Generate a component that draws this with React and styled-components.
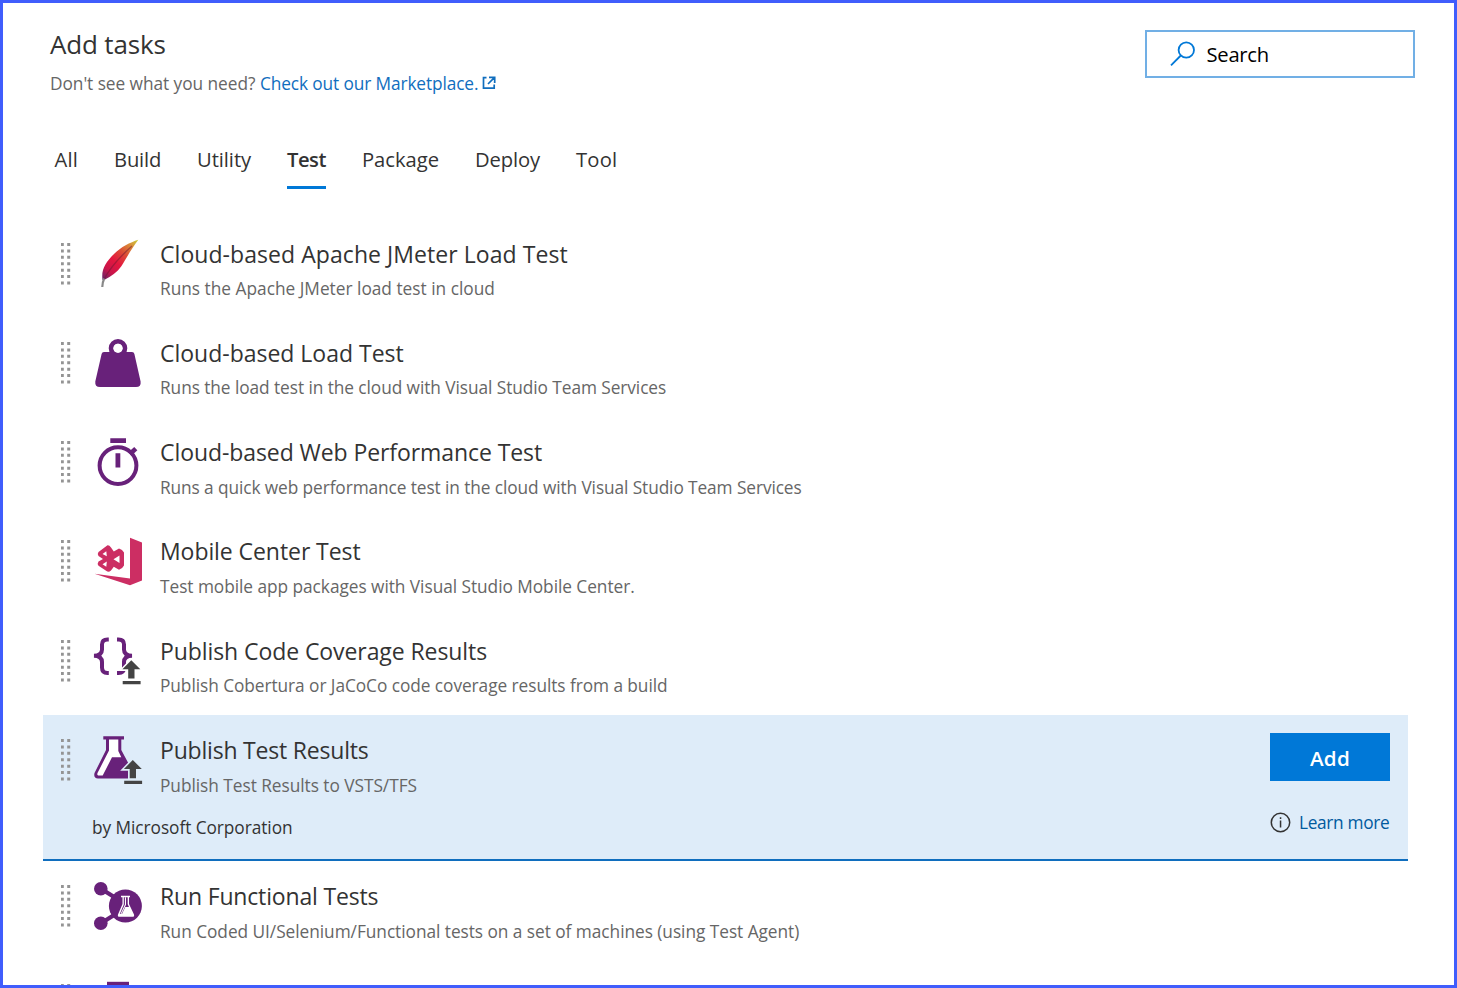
import React from 'react';
import styled, { createGlobalStyle } from 'styled-components';

const PURPLE = '#68217a';

const GlobalStyle = createGlobalStyle`
  * { box-sizing: border-box; }
  body { margin: 0; background: #fff; font-family: "Open Sans", "Noto Sans", sans-serif; color: #333; }
`;

const Frame = styled.main`
  width: 1457px;
  height: 988px;
  overflow: hidden;
  border: 3px solid #405dfc;
  background: #fff;
`;

const Header = styled.header`
  display: flex;
  justify-content: space-between;
  align-items: flex-start;
  padding: 23px 39px 0 47px;
`;

const Title = styled.h1`
  margin: 0 0 10px;
  font-size: 26px;
  font-weight: 400;
  line-height: 36px;
  letter-spacing: -0.17px;
`;

const Hint = styled.p`
  display: flex;
  margin: 0;
  font-size: 17.3px;
  line-height: 24px;
  color: #666;
`;

const HintText = styled.span`
  width: 210px;
  white-space: nowrap;
  letter-spacing: -0.05px;
`;

const MarketLink = styled.a`
  display: flex;
  gap: 4px;
  color: #106ebe;
  white-space: nowrap;
  letter-spacing: -0.12px;

  svg { margin-top: 4px; }
`;

const SearchBox = styled.div`
  display: flex;
  align-items: center;
  width: 270px;
  height: 48px;
  margin-top: 4px;
  padding-left: 22px;
  gap: 9.5px;
  border: 2px solid #71afe5;
  color: #000;
  font-size: 20.2px;
  line-height: 28px;
  letter-spacing: -0.25px;
`;

const Tabs = styled.nav`
  display: flex;
  gap: 36px;
  padding: 49px 0 0 51.5px;
`;

const Tab = styled.span`
  height: 44px;
  font-size: 20.2px;
  line-height: 28px;
  font-weight: ${(p) => (p.$active ? 600 : 400)};
  letter-spacing: ${(p) => p.$track}px;
  border-bottom: 3px solid ${(p) => (p.$active ? '#0078d7' : 'transparent')};
`;

const List = styled.section`
  padding: 29px 46px 0 40px;
`;

const Row = styled.article`
  display: flex;
  height: ${(p) => (p.$selected ? 146 : 99.33)}px;
  padding: 0 18px;
  background: ${(p) => (p.$selected ? '#deecf9' : 'transparent')};
  border-bottom: ${(p) => (p.$selected ? '2px solid #106ebe' : 'none')};
`;

const Grip = styled.svg`
  flex: none;
  display: block;
  width: 10px;
  height: 43px;
  margin: 24.5px 21px 0 0;
`;

const Details = styled.div`
  flex: 1;
  padding-top: 19.5px;
`;

const Summary = styled.div`
  display: flex;
  gap: 18px;
  height: 81.5px;
`;

const IconSlot = styled.div`
  width: 50px;
  padding: 1.7px 0 0 2px;

  svg { display: block; overflow: visible; }
`;

const Name = styled.h2`
  margin: 0 0 7.4px;
  font-size: 23px;
  font-weight: 400;
  line-height: 32px;
  letter-spacing: ${(p) => p.$track}px;
`;

const Description = styled.p`
  margin: 0;
  font-size: 17.3px;
  line-height: 24px;
  color: #666;
  letter-spacing: ${(p) => p.$track}px;
`;

const Author = styled.div`
  font-size: 17.3px;
  line-height: 24px;
  letter-spacing: -0.06px;
`;

const Actions = styled.div`
  width: 120px;
  padding-top: 18.3px;
`;

const AddButton = styled.button`
  display: block;
  width: 120px;
  height: 48px;
  margin: 0 0 30px;
  padding: 3px 0 0;
  border: 0;
  background: #0078d7;
  color: #fff;
  font: 600 20.6px/28px "Open Sans", sans-serif;
  letter-spacing: 0.3px;
`;

const LearnMore = styled.a`
  display: flex;
  align-items: center;
  gap: 8px;
  color: #005a9e;
  font-size: 17.3px;
  line-height: 24px;
  white-space: nowrap;
  letter-spacing: -0.32px;
`;

const Svg48 = ({ children }) => (
  <svg width="48" height="48" viewBox="0 0 48 48">{children}</svg>
);

const Feather = () => (
  <Svg48>
    <defs>
      <linearGradient id="plume" x1="44" y1="1" x2="10" y2="40" gradientUnits="userSpaceOnUse">
        <stop offset="0" stopColor="#c9cf3a" />
        <stop offset="0.16" stopColor="#d9913a" />
        <stop offset="0.38" stopColor="#dc4a35" />
        <stop offset="0.6" stopColor="#e3173f" />
        <stop offset="0.82" stopColor="#c9154a" />
        <stop offset="1" stopColor="#6b2468" />
      </linearGradient>
    </defs>
    <path d="M44.300 .8C36 3.500 27 8 20 15C12 23 7 30 8.500 41L11 40.500C17 37.500 23 33.500 27.500 27C32 20 36 12 44.300 .8Z" fill="url(#plume)" />
    <path d="M38 7C29 15 17 27 9.500 41" fill="none" stroke="#6f1630" strokeOpacity=".5" strokeWidth="1.300" />
    <path d="M10.200 39.500C9 42 8.500 44.500 8.300 48" fill="none" stroke="#888" strokeWidth="2.200" />
  </Svg48>
);

const Weight = () => (
  <Svg48>
    <circle cx="24" cy="9.300" r="6.900" fill="none" stroke={PURPLE} strokeWidth="4.800" />
    <path d="M10 13H38Q40 13 40.400 15L46.600 42.500Q47.300 48 42 48H6Q.7 48 1.300 42.500L7.600 15Q8 13 10 13Z" fill={PURPLE} />
    <circle cx="24" cy="9.300" r="4.600" fill="#fff" />
  </Svg48>
);

const Stopwatch = () => (
  <Svg48>
    <path d="M16.300 .2H32V5H16.300ZM21.500 15.300H26.300V29.500H21.500Z" fill={PURPLE} />
    <circle cx="24" cy="27.600" r="18.400" fill="none" stroke={PURPLE} strokeWidth="4" />
    <path d="M36 16L41.800 10.600" stroke={PURPLE} strokeWidth="4.600" />
  </Svg48>
);

const MobileCenter = () => (
  <Svg48>
    <path d="M36 .7L48 5.400V43.400L36 48.200L.5 36.700L36 41.500Z" fill="#cc2e63" />
    <path
      fillRule="evenodd"
      d="M13.500 8.300Q15.300 8 17 10.500L19.800 14.500L25 11.500Q28.500 12.500 30 15.500V28.500Q28.500 31.700 25 32.700L19.800 29.700L17 33.500Q14.500 35.800 12.500 34L4.500 28.800Q3 26.500 4.500 24.500L9 22L4.500 19Q3 17 4.500 15ZM12.300 14.300L8.500 17L12.800 19.300ZM12.300 29.800L8.500 27.200L12.800 24.600ZM25.500 18.500L19.500 22.200L25.500 26Z"
      fill="#cc2e63"
    />
  </Svg48>
);

const Upload = ({ halo, x = 0, y = 0 }) => (
  <g transform={`translate(${x} ${y})`}>
    <path d="M37.300 23.500L46 32.300H40.500V41.500H34.200V32.300H28.700Z" fill={halo} stroke={halo} strokeWidth="3.400" />
    <path d="M37.300 23.300L46.300 32.300H40.500V41.500H34.200V32.300H28.400ZM28.700 44H46.600V47.200H28.700Z" fill="#444" />
  </g>
);

const Braces = () => (
  <Svg48>
    <path
      d="M14.800 2.500H13.500Q8 2.500 8 7.500V12.500Q8 18.500 0 18.700Q8 19 8 25V30.500Q8 36 13.500 36H14.800M23 2.500H24.500Q30 2.500 30 7.500V12.500Q30 18.500 38 18.700Q30 19 30 25V30.500Q30 36 24.500 36H23"
      fill="none"
      stroke={PURPLE}
      strokeWidth="4"
    />
    <Upload halo="#fff" />
  </Svg48>
);

const Flask = () => (
  <Svg48>
    <path d="M9.300 .3H30V3.500H27.300V14L39.300 36.500V42.500H4Q-.7 42.300 .5 37L12 14V3.500H9.300Z" fill={PURPLE} />
    <path d="M15 3.500H24.300V15L27.300 21.300H18L8.700 39.600H4.200Q2.800 39 3.500 37L15 14.500Z" fill="#fff" />
    <Upload halo="#deecf9" x={1.5} y={0.7} />
  </Svg48>
);

const Functional = () => (
  <Svg48>
    <path d="M7 6.700L31.300 22M7 41.300L31.300 26" stroke={PURPLE} strokeWidth="4.300" />
    <circle cx="6.800" cy="6.800" r="6.800" fill={PURPLE} />
    <circle cx="6.800" cy="41.200" r="6.800" fill={PURPLE} />
    <circle cx="31.400" cy="24" r="16.500" fill={PURPLE} />
    <path d="M27 13.700H36V15.300H35V22L40 32.500Q40.600 34.800 38.500 34.800H25.500Q23.300 34.800 24 32.500L28.500 22V15.300H27Z" fill="#fff" />
    <path d="M29.800 15.300H33.700V22.300L35 25H31.300L28 32H25.800L29.800 22.500Z" fill={PURPLE} />
    <path d="M30.900 15.300H32V22.800L27.500 32H26.500L30.900 22.500Z" fill="#fff" />
  </Svg48>
);

const Partial = () => (
  <Svg48>
    <path d="M13 .8H35V5H13Z" fill={PURPLE} />
  </Svg48>
);

const Dots = () => (
  <Grip viewBox="0 0 10 43">
    {[0, 1, 2, 3, 4, 5, 6].map((i) => (
      <path key={i} d={`M-.2 ${i * 6.42}h3v3h-3zM6.200 ${i * 6.42}h3v3h-3z`} fill="#949494" />
    ))}
  </Grip>
);

const tabs = [
  ['All', 0.2], ['Build', -0.2], ['Utility', -0.07], ['Test', -0.5],
  ['Package', 0], ['Deploy', -0.13], ['Tool', 0.2],
];

const tasks = [
  { icon: Feather, name: 'Cloud-based Apache JMeter Load Test', nt: 0.063, text: 'Runs the Apache JMeter load test in cloud', dt: 0 },
  { icon: Weight, name: 'Cloud-based Load Test', nt: -0.01, text: 'Runs the load test in the cloud with Visual Studio Team Services', dt: -0.069 },
  { icon: Stopwatch, name: 'Cloud-based Web Performance Test', nt: -0.079, text: 'Runs a quick web performance test in the cloud with Visual Studio Team Services', dt: -0.095 },
  { icon: MobileCenter, name: 'Mobile Center Test', nt: -0.07, text: 'Test mobile app packages with Visual Studio Mobile Center.', dt: -0.044 },
  { icon: Braces, name: 'Publish Code Coverage Results', nt: -0.08, text: 'Publish Cobertura or JaCoCo code coverage results from a build', dt: -0.06 },
  { icon: Flask, name: 'Publish Test Results', nt: -0.2, text: 'Publish Test Results to VSTS/TFS', dt: -0.04, author: 'by Microsoft Corporation' },
  { icon: Functional, name: 'Run Functional Tests', nt: -0.17, text: 'Run Coded UI/Selenium/Functional tests on a set of machines (using Test Agent)', dt: -0.044 },
  { icon: Partial },
];

function Task({ task }) {
  const Icon = task.icon;
  return (
    <Row $selected={Boolean(task.author)}>
      <Dots />
      <Details>
        <Summary>
          <IconSlot><Icon /></IconSlot>
          {task.name && (
            <div>
              <Name $track={task.nt}>{task.name}</Name>
              <Description $track={task.dt}>{task.text}</Description>
            </div>
          )}
        </Summary>
        {task.author && <Author>{task.author}</Author>}
      </Details>
      {task.author && (
        <Actions>
          <AddButton>Add</AddButton>
          <LearnMore>
            <svg width="21" height="21" viewBox="0 0 21 21">
              <circle cx="10.500" cy="10.500" r="9.200" fill="none" stroke="#333" strokeWidth="1.500" />
              <path d="M9.800 8.500h1.500v7h-1.500zM9.800 5.300h1.500v1.700h-1.500z" fill="#333" />
            </svg>
            Learn more
          </LearnMore>
        </Actions>
      )}
    </Row>
  );
}

export default function App() {
  return (
    <Frame>
      <GlobalStyle />
      <Header>
        <div>
          <Title>Add tasks</Title>
          <Hint>
            <HintText>Don't see what you need?</HintText>
            <MarketLink>
              Check out our Marketplace.
              <svg width="14" height="14" viewBox="0 0 14 14" fill="none" stroke="#106ebe" strokeWidth="1.700">
                <path d="M4.500 1.700H1.500V12.200H12.200V8.500M7 1.300H12.700V7M12.300 1.700L6 8" />
              </svg>
            </MarketLink>
          </Hint>
        </div>
        <SearchBox>
          <svg width="28" height="28" viewBox="0 0 28 28" fill="none" stroke="#0078d7" strokeWidth="1.800">
            <circle cx="17.300" cy="10" r="7.700" />
            <path d="M11.800 15.500L2 25.300" />
          </svg>
          Search
        </SearchBox>
      </Header>
      <Tabs>
        {tabs.map(([label, track]) => (
          <Tab key={label} $track={track} $active={label === 'Test'}>{label}</Tab>
        ))}
      </Tabs>
      <List>
        {tasks.map((task, i) => <Task key={i} task={task} />)}
      </List>
    </Frame>
  );
}
